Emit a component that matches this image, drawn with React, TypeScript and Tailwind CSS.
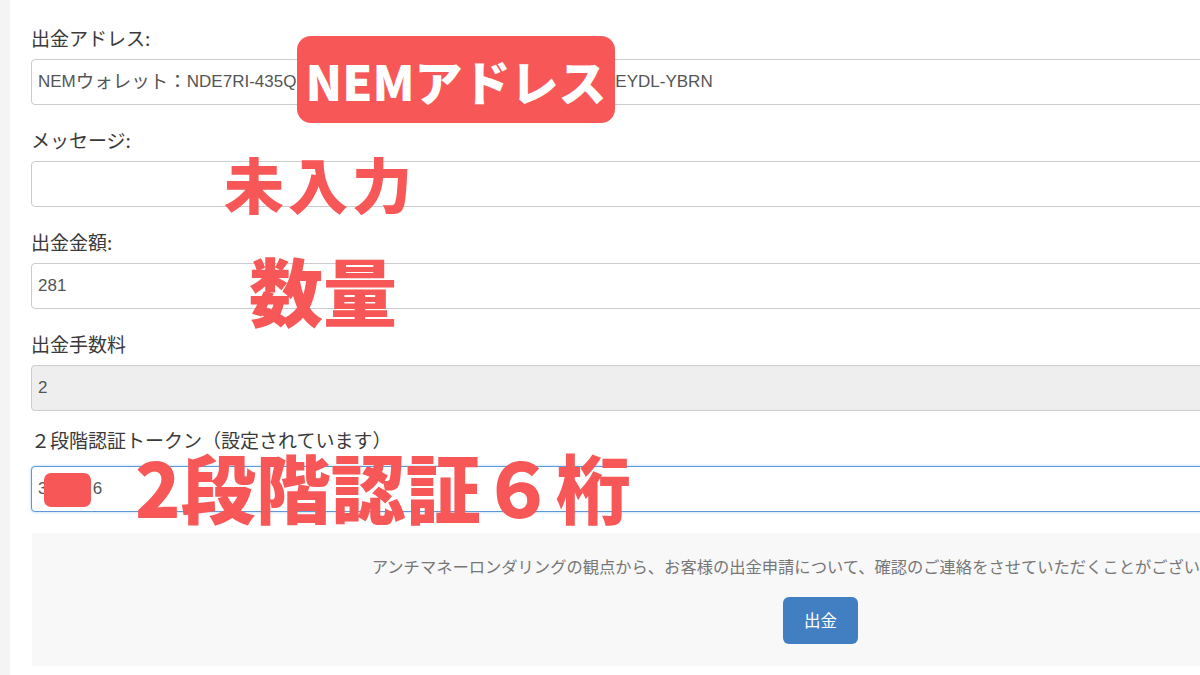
import React from 'react'

const FONT = { fontFamily: '"Noto Sans CJK JP", "Noto Sans", sans-serif' }
const INPUT_FONT = { fontFamily: '"Liberation Sans", "Noto Sans CJK JP", sans-serif' }

interface FieldProps {
  label: string
  value: React.ReactNode
  disabled?: boolean
  focused?: boolean
  labelClass?: string
  valueClass?: string
}

function Field({ label, value, disabled, focused, labelClass = 'mb-[10px]', valueClass = '' }: FieldProps) {
  return (
    <div>
      <div className={`h-[22px] text-[19px] leading-[22px] text-[#3a3a3a] ${labelClass}`}>{label}</div>
      <div
        style={INPUT_FONT}
        className={`
          h-[46px] flex items-center px-[6px] rounded-[4px] border text-[17px] text-[#555] whitespace-nowrap
          ${disabled ? 'bg-[#eeeeee]' : 'bg-white'}
          ${focused ? 'border-[#5f98d6] shadow-[0_0_3px_rgba(102,175,233,0.6)]' : 'border-[#cccccc]'}
          ${valueClass}
        `}
      >
        {value}
      </div>
    </div>
  )
}

export default function App() {
  return (
    <div className="relative w-[1200px] h-[675px] overflow-hidden bg-white flex" style={FONT}>
      <div className="w-[10px] shrink-0 bg-[#f4f4f4]" />

      <div className="pl-[21px] pt-[27px] shrink-0">
        <div className="w-[1578px] flex flex-col">
          <div className="flex flex-col gap-[24px]">
            <Field
              label="出金アドレス:"
              value={
                <>
                  NEM<span className="text-[18.5px]">ウォレット：</span>NDE7RI-435QKA-5MZ3TV-RW6GXH-OPJ2LC-W4SQK7EYDL-YBRN
                </>
              }
            />
            <Field label="メッセージ:" value="" />
            <Field label="出金金額:" value="281" />
            <Field label="出金手数料" value="2" disabled />
          </div>
          <div className="mt-[18px]">
            <Field
              label="２段階認証トークン（設定されています）"
              value="381426"
              focused
              labelClass="mb-[15px]"
              valueClass="tracking-[1.5px]"
            />
          </div>

          <div className="mt-[21px] ml-[1px] h-[133px] bg-[#f8f8f8] flex flex-col items-center pt-[21px]">
            <p className="pr-[22px] text-[16.3px] leading-[24px] text-[#777] whitespace-nowrap">
              アンチマネーロンダリングの観点から、お客様の出金申請について、確認のご連絡をさせていただくことがございます。
            </p>
            <button className="mt-[19px] w-[75px] h-[47px] rounded-[6px] bg-[#427fc2] text-white text-[16.5px]">
              出金
            </button>
          </div>
        </div>
      </div>

      {/* annotation overlays */}
      <div className="absolute left-[297px] top-[36px] w-[318px] h-[87px] rounded-[14px] bg-[#f85757] flex items-center justify-center text-white text-[48px] font-black">
        NEMアドレス
      </div>
      <div className="absolute left-[224px] top-[143px] text-[#f85757] text-[60px] leading-[80px] font-black tracking-[4px]">
        未入力
      </div>
      <div className="absolute left-[249px] top-[245px] text-[#f85757] text-[74px] leading-[88px] font-black">
        数量
      </div>
      <div className="absolute left-[44px] top-[473px] w-[47px] h-[34px] rounded-[7px] bg-[#f85757]" />
      <div className="absolute left-[135px] top-[440px] text-[#f85757] text-[75px] leading-[92px] font-black">
        2段階認証６桁
      </div>
    </div>
  )
}
